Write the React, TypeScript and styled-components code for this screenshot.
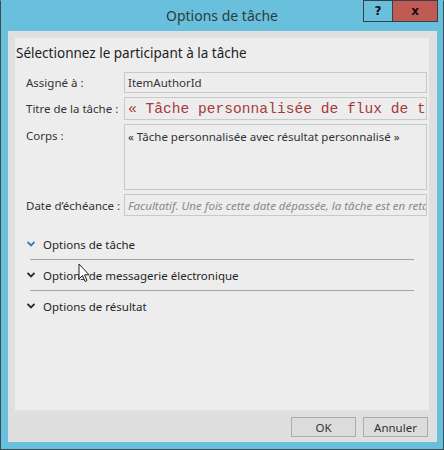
import React from "react";
import styled, { createGlobalStyle } from "styled-components";

const Global = createGlobalStyle`
  html, body { margin: 0; padding: 0; }
  body { width: 444px; height: 450px; overflow: hidden; font-family: "Noto Sans", "Segoe UI", sans-serif; }
`;

const Window = styled.div`
  position: relative;
  box-sizing: border-box;
  width: 444px;
  height: 450px;
  background: #69c0dc;
  border: 1px solid #3d4a50;
  border-top-color: #69c0dc;
  display: flex;
  flex-direction: column;
`;

const TitleBar = styled.div`
  height: 30px;
  flex: none;
  position: relative;
  display: flex;
  align-items: center;
  justify-content: center;
`;

const Title = styled.div`
  font-family: "Noto Sans", sans-serif;
  font-size: 14px;
  color: #2f3b40;
  margin-top: -1px;
`;

const Controls = styled.div`
  position: absolute;
  top: -1px;
  right: 5px;
  display: flex;
`;

const CtlButton = styled.div<{ $close?: boolean }>`
  box-sizing: border-box;
  height: 22px;
  width: ${(p) => (p.$close ? "46px" : "30px")};
  background: ${(p) => (p.$close ? "#bf5b54" : "#69c0dc")};
  border: 1px solid #3a3f42;
  margin-left: ${(p) => (p.$close ? "-1px" : "0")};
  display: flex;
  align-items: center;
  justify-content: center;
  font-family: "DejaVu Sans", sans-serif;
  font-weight: bold;
  font-size: 12px;
  color: #111;
`;

const Body = styled.div`
  flex: 1;
  margin: 0 6px 7px 7px;
  background: #dfdfdf;
  display: flex;
  flex-direction: column;
  padding: 7px 8px 0 7px;
`;

const Panel = styled.div`
  height: 372px;
  background: #ededed;
  display: flex;
  flex-direction: column;
  position: relative;
`;

const Heading = styled.div`
  font-size: 13.5px;
  color: #1e1e1e;
  padding: 6px 0 0 1px;
  height: 26px;
  box-sizing: border-box;
`;

const Form = styled.div`
  display: grid;
  grid-template-columns: 98px 303px;
  row-gap: 4px;
  padding-left: 11px;
  margin-top: 8px;
`;

const Label = styled.div<{ $top?: boolean }>`
  font-size: 11.5px;
  color: #333;
  display: flex;
  align-items: ${(p) => (p.$top ? "flex-start" : "center")};
  padding-top: ${(p) => (p.$top ? "4px" : "0")};
  white-space: nowrap;
`;

const Field = styled.div<{ $h: number }>`
  box-sizing: border-box;
  height: ${(p) => p.$h}px;
  border: 1px solid #c9c9c9;
  background: #ededed;
  padding: 0 3px;
  display: flex;
  align-items: ${(p) => (p.$h > 30 ? "flex-start" : "center")};
  padding-top: ${(p) => (p.$h > 30 ? "4px" : "0")};
  overflow: hidden;
  white-space: nowrap;
  font-size: 11.5px;
  color: #333;
`;

const MonoText = styled.span`
  font-family: "Liberation Mono", monospace;
  font-size: 14.6px;
  color: #a83a3a;
`;

const Placeholder = styled.span`
  font-style: italic;
  color: #8a8a8a;
`;

const Sections = styled.div`
  margin-top: 13px;
  padding-left: 11px;
  display: flex;
  flex-direction: column;
`;

const Section = styled.div`
  height: 30px;
  box-sizing: border-box;
  display: flex;
  align-items: center;
  gap: 8px;
`;

const SectionWrap = styled.div`
  display: flex;
  flex-direction: column;
`;

const SectionText = styled.span`
  font-size: 11.5px;
  color: #262626;
`;

const Chevron = styled.svg`
  width: 8px;
  height: 6px;
  flex: none;
  margin-left: 1px;
`;

const Separator = styled.div`
  height: 1px;
  background: #a4a4a4;
  margin: 0 0 0 4px;
  width: 384px;
`;

const Footer = styled.div`
  flex: 1;
  display: flex;
  justify-content: flex-end;
  align-items: flex-start;
  gap: 7px;
  padding-top: 7px;
  margin-right: 1px;
`;

const Btn = styled.div`
  box-sizing: border-box;
  height: 20px;
  width: 65px;
  border: 1px solid #acacac;
  background: #dcdcdc;
  display: flex;
  align-items: center;
  justify-content: center;
  font-size: 11.5px;
  color: #333;
`;

const Cursor = styled.svg`
  position: absolute;
  left: 77px;
  top: 262px;
  width: 12px;
  height: 20px;
`;

function Chev({ color }: { color: string }) {
  return (
    <Chevron viewBox="0 0 8 6">
      <path d="M0.5 1 L4 4.5 L7.5 1" fill="none" stroke={color} strokeWidth="1.8" />
    </Chevron>
  );
}

export default function App() {
  return (
    <>
      <Global />
      <Window>
        <TitleBar>
          <Title>Options de tâche</Title>
          <Controls>
            <CtlButton>?</CtlButton>
            <CtlButton $close>x</CtlButton>
          </Controls>
        </TitleBar>
        <Body>
          <Panel>
            <Heading>Sélectionnez le participant à la tâche</Heading>
            <Form>
              <Label>Assigné à :</Label>
              <Field $h={21}>ItemAuthorId</Field>
              <Label>Titre de la tâche :</Label>
              <Field $h={23}>
                <MonoText>« Tâche personnalisée de flux de travail »</MonoText>
              </Field>
              <Label $top>Corps :</Label>
              <Field $h={66}>« Tâche personnalisée avec résultat personnalisé »</Field>
              <Label>Date d’échéance :</Label>
              <Field $h={22}>
                <Placeholder>Facultatif. Une fois cette date dépassée, la tâche est en retard.</Placeholder>
              </Field>
            </Form>
            <Sections>
              <SectionWrap>
                <Section>
                  <Chev color="#3a78b4" />
                  <SectionText>Options de tâche</SectionText>
                </Section>
                <Separator />
              </SectionWrap>
              <SectionWrap>
                <Section>
                  <Chev color="#2a2a2a" />
                  <SectionText>Options de messagerie électronique</SectionText>
                </Section>
                <Separator />
              </SectionWrap>
              <SectionWrap>
                <Section>
                  <Chev color="#2a2a2a" />
                  <SectionText>Options de résultat</SectionText>
                </Section>
              </SectionWrap>
            </Sections>
          </Panel>
          <Footer>
            <Btn>OK</Btn>
            <Btn>Annuler</Btn>
          </Footer>
        </Body>
        <Cursor viewBox="0 0 12 20">
          <path d="M1 1 L1 16 L4.5 12.5 L7 18.5 L9 17.6 L6.6 11.8 L11 11.8 Z" fill="#fff" stroke="#222" strokeWidth="1" strokeLinejoin="round" />
        </Cursor>
      </Window>
    </>
  );
}
